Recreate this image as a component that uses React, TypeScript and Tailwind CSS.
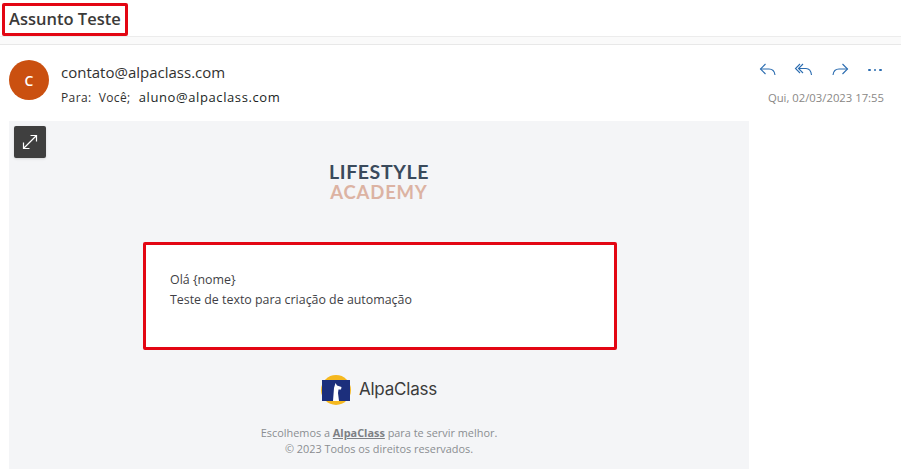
function Reply() {
  return (
    <svg width="20" height="20" viewBox="0 0 20 20" fill="none" stroke="#2b6cb0" strokeWidth="1.1">
      <path d="M7.5 4 2.5 9l5 5" />
      <path d="M2.5 9H11c3.5 0 5.5 2 6 6" />
    </svg>
  );
}

function ReplyAll() {
  return (
    <svg width="20" height="20" viewBox="0 0 20 20" fill="none" stroke="#2b6cb0" strokeWidth="1.1">
      <path d="M6 4 1.5 8.5 6 13" />
      <path d="M9 4 4.5 8.5 9 13" />
      <path d="M4.5 8.5H12c3 0 5 2.2 5.5 6.5" />
    </svg>
  );
}

function Forward() {
  return (
    <svg width="20" height="20" viewBox="0 0 20 20" fill="none" stroke="#2b6cb0" strokeWidth="1.1">
      <path d="M12.5 4l5 5-5 5" />
      <path d="M17.5 9H9c-3.5 0-5.5 2-6 6" />
    </svg>
  );
}

function Logo() {
  return (
    <svg width="30" height="30" viewBox="0 0 30 30">
      <circle cx="15" cy="15" r="15" fill="#f5b81f" />
      <rect x="1" y="5" width="28" height="21" fill="#1c2f7c" />
      <path d="M12 26 13 13 14.5 8 16 10.5 20.5 12 20 14.5 17.5 14.5 17 18 18 26z" fill="#fff" />
    </svg>
  );
}

export default function App() {
  return (
    <div className="w-[901px] h-[470px] overflow-hidden bg-white font-['Open_Sans',sans-serif]">
      {/* SUBJECT */}
      <div className="h-[37px] pt-[3px] pl-[2px] border-b border-[#ececec]">
        <h1 className="w-[126px] h-[33px] border-[3px] border-[#e30613] rounded-[2px] pl-[4px] text-[16.5px] leading-[26px] font-semibold text-[#3b3a39] whitespace-nowrap">
          Assunto Teste
        </h1>
      </div>
      <div className="h-[8px] bg-[#fafafa] border-b border-[#e8e8e8]" />

      {/* HEADER */}
      <div className="h-[76px] flex pl-[9px] pr-[15px]">
        <div className="w-[40px] h-[40px] mt-[15px] rounded-full bg-[#ca5010] flex items-center justify-center text-white text-[14px] font-semibold">
          C
        </div>
        <div className="ml-[12px] pt-[16px] flex-1">
          <div className="text-[15px] leading-[22px] text-[#323130]">contato@alpaclass.com</div>
          <div className="mt-[4px] text-[12px] leading-[20px] tracking-[0.4px] text-[#323130] whitespace-pre">
            Para:  Você;  <span className="ml-[1px] text-[#201f1e] text-[13px] tracking-[0.6px]">aluno@alpaclass.com</span>
          </div>
        </div>
        <div className="flex flex-col items-end pt-[15px]">
          <div className="flex items-center gap-[16px]">
            <Reply />
            <ReplyAll />
            <Forward />
            <div className="w-[20px] -ml-[1px] mr-[1px] flex justify-center gap-[3px]">
              <span className="w-[2.5px] h-[2.5px] rounded-full bg-[#2b6cb0]" />
              <span className="w-[2.5px] h-[2.5px] rounded-full bg-[#2b6cb0]" />
              <span className="w-[2.5px] h-[2.5px] rounded-full bg-[#2b6cb0]" />
            </div>
          </div>
          <div className="mt-[10px] mr-[2px] text-[11.3px] leading-[16px] text-[#8a8886]">Qui, 02/03/2023 17:55</div>
        </div>
      </div>

      {/* MESSAGE BODY */}
      <div className="relative ml-[9px] w-[740px] h-[348px] bg-[#f4f5f7] flex flex-col items-center">
        <button className="absolute left-[5px] top-[5px] w-[32px] h-[32px] rounded-[2px] bg-[#3f3f3f] flex items-center justify-center shadow">
          <svg width="16" height="16" viewBox="0 0 16 16" fill="none" stroke="#fff" strokeWidth="1.2">
            <path d="M1.5 14.5 14.5 1.5M8.5 1.5h6v6M1.5 8.5v6h6" />
          </svg>
        </button>

        <div className="mt-[41px] h-[40px] flex flex-col items-center font-['Lato',sans-serif] font-bold leading-[20px]">
          <span className="text-[19.5px] tracking-[0.6px] text-[#3a4a5c]">LIFESTYLE</span>
          <span className="text-[18.5px] tracking-[0.8px] text-[#dcb3a3]">ACADEMY</span>
        </div>

        <div className="mt-[40px] ml-[2px] w-[474px] h-[108px] bg-white border-[3px] border-[#e30613] rounded-[2px] pt-[25px] pl-[24px] text-[12.4px] leading-[20px] text-[#3f3f46]">
          <div>Olá {"{nome}"}</div>
          <div>Teste de texto para criação de automação</div>
        </div>

        <div className="mt-[25px] flex items-center gap-[8px]">
          <Logo />
          <span className="font-['Inter',sans-serif] text-[17px] font-normal text-[#3b3b3b] tracking-[-0.2px]">AlpaClass</span>
        </div>

        <div className="mt-[20px] text-center text-[10.9px] leading-[16px] text-[#8a8d91]">
          <div>
            Escolhemos a <a className="font-bold underline text-[#7d8084]">AlpaClass</a> para te servir melhor.
          </div>
          <div>© 2023 Todos os direitos reservados.</div>
        </div>
      </div>
    </div>
  );
}
